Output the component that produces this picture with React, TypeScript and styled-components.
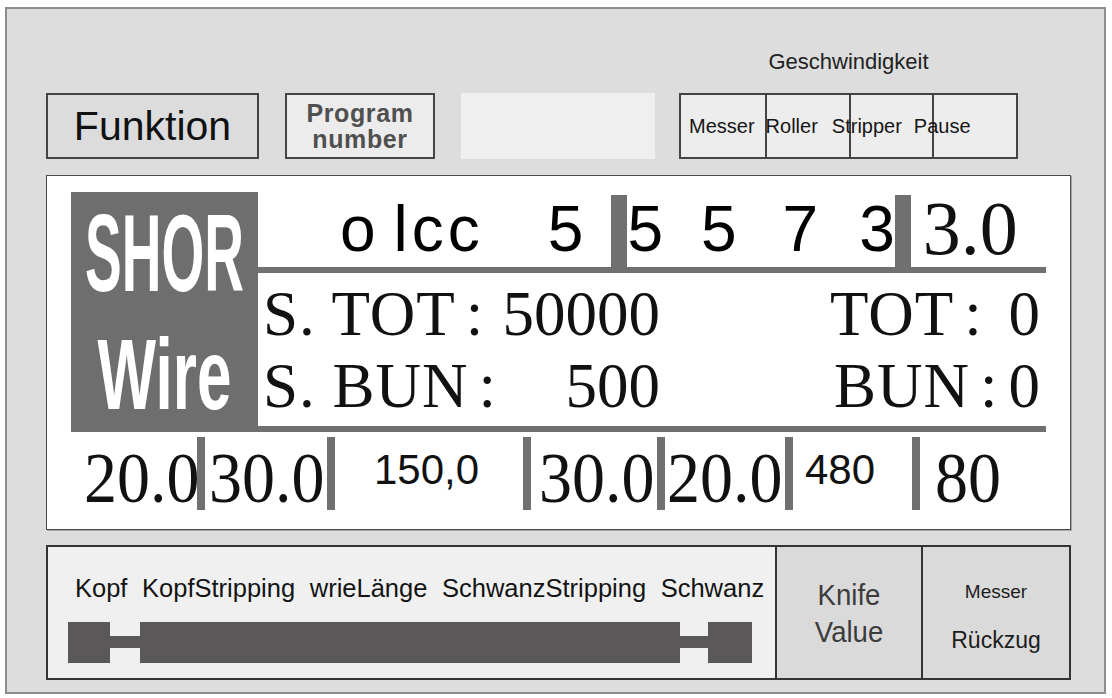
import React from "react";
import styled, { createGlobalStyle } from "styled-components";

const Global = createGlobalStyle`
  html, body { margin: 0; padding: 0; background: #ffffff; }
  body { font-family: "Liberation Sans", Arial, sans-serif; color: #111; }
`;

const Frame = styled.div`
  box-sizing: border-box;
  margin: 7px 0 0 5px;
  width: 1101px;
  height: 687px;
  border: 2px solid #8d8d8d;
  background: #dddddd;
  display: flex;
  flex-direction: column;
  padding-left: 39px;
`;

const TopRow = styled.div`
  height: 150px;
  display: flex;
  align-items: flex-end;
`;

const Box = styled.div<{ $w: number; $mr: number; $bg: string; $border?: boolean }>`
  box-sizing: border-box;
  width: ${(p) => p.$w}px;
  height: 66px;
  margin-right: ${(p) => p.$mr}px;
  background: ${(p) => p.$bg};
  border: ${(p) => (p.$border ? "2px solid #444" : "none")};
  display: flex;
  align-items: center;
  justify-content: center;
  text-align: center;
`;

const FunktionText = styled.span`
  font-size: 41px;
  color: #111;
`;

const ProgramText = styled.span`
  font-size: 25px;
  font-weight: bold;
  line-height: 26px;
  color: #505050;
  letter-spacing: 0.6px;
`;

const SpeedGroup = styled.div`
  display: flex;
  flex-direction: column;
  align-items: center;
  width: 339px;
`;

const SpeedTitle = styled.div`
  font-size: 22px;
  line-height: 28px;
  color: #222;
  margin-bottom: 17px;
`;

const SpeedTable = styled.div`
  box-sizing: border-box;
  width: 339px;
  height: 66px;
  border: 2px solid #444;
  background: #ededed;
  display: grid;
  grid-template-columns: repeat(4, 1fr);
`;

const SpeedCell = styled.div<{ $col: number }>`
  grid-row: 1;
  grid-column: ${(p) => p.$col};
  border-left: ${(p) => (p.$col === 1 ? "none" : "2px solid #444")};
`;

const SpeedLabels = styled.div`
  grid-row: 1;
  grid-column: 1 / -1;
  display: flex;
  align-items: center;
  font-size: 20px;
  color: #151515;
  white-space: nowrap;
`;

const SpeedLabel = styled.span<{ $ml: number }>`
  margin-left: ${(p) => p.$ml}px;
`;

const Display = styled.div`
  box-sizing: border-box;
  margin-top: 16px;
  width: 1025px;
  height: 355px;
  border: 1px solid #4a4a4a;
  box-shadow: 1px 1px 0 #a8a8a8;
  background: #ffffff;
  padding: 16px 0 0 24px;
  display: flex;
  flex-direction: column;
`;

const TopSection = styled.div`
  display: flex;
  height: 240px;
`;

const NameBlock = styled.div`
  box-sizing: border-box;
  width: 187px;
  height: 240px;
  background: #6e6e6e;
  display: flex;
  flex-direction: column;
  align-items: center;
  padding-top: 7px;
`;

const NameLine = styled.div<{ $fs: number; $sy: number; $h: number }>`
  font-family: "Liberation Sans", Arial, sans-serif;
  font-weight: bold;
  font-size: ${(p) => p.$fs}px;
  line-height: ${(p) => p.$fs}px;
  height: ${(p) => p.$h}px;
  color: #ffffff;
  white-space: nowrap;
  transform: scaleY(${(p) => p.$sy});
  transform-origin: 50% 0;
`;

const RightArea = styled.div`
  width: 788px;
  display: flex;
  flex-direction: column;
`;

const NumberRow = styled.div`
  height: 75px;
  display: flex;
  align-items: flex-end;
  white-space: nowrap;
`;

const SansBig = styled.span<{ $ml: number; $ls?: number }>`
  font-family: "Liberation Sans", Arial, sans-serif;
  font-size: 64px;
  line-height: 64px;
  margin-left: ${(p) => p.$ml}px;
  margin-bottom: 6px;
  letter-spacing: ${(p) => p.$ls ?? 0}px;
  color: #000;
`;

const SerifBig = styled.span<{ $ml: number }>`
  font-family: "Liberation Serif", "Times New Roman", serif;
  font-size: 76px;
  line-height: 76px;
  margin-left: ${(p) => p.$ml}px;
  margin-bottom: 1px;
  color: #111;
`;

const Bar = styled.div<{ $w: number; $h: number; $ml?: number; $mt?: number }>`
  flex: none;
  width: ${(p) => p.$w}px;
  height: ${(p) => p.$h}px;
  margin-left: ${(p) => p.$ml ?? 0}px;
  margin-top: ${(p) => p.$mt ?? 0}px;
  background: #707070;
`;

const HLine = styled.div`
  height: 6px;
  background: #707070;
`;

const CountRow = styled.div<{ $pb: number }>`
  box-sizing: border-box;
  height: 77px;
  padding-bottom: ${(p) => p.$pb}px;
  display: grid;
  grid-template-columns: 232px 170px 170px 170px 46px;
  align-items: end;
  font-family: "Liberation Serif", "Times New Roman", serif;
  font-size: 63px;
  line-height: 63px;
  color: #111;
  white-space: nowrap;
`;

const CountCell = styled.div<{ $align: "left" | "right"; $pad?: number; $ls?: number }>`
  text-align: ${(p) => p.$align};
  padding-left: ${(p) => (p.$align === "left" ? p.$pad ?? 0 : 0)}px;
  padding-right: ${(p) => (p.$align === "right" ? p.$pad ?? 0 : 0)}px;
  letter-spacing: ${(p) => p.$ls ?? 0}px;
`;

const Colon = styled.span`
  margin-left: 10px;
`;

const BottomRow = styled.div`
  display: flex;
  align-items: flex-start;
  height: 88px;
  white-space: nowrap;
`;

const ValCell = styled.div<{ $w: number; $pl: number; $sans?: boolean }>`
  flex: none;
  box-sizing: border-box;
  width: ${(p) => p.$w}px;
  padding-left: ${(p) => p.$pl}px;
  font-family: ${(p) =>
    p.$sans
      ? `"Liberation Sans", Arial, sans-serif`
      : `"Liberation Serif", "Times New Roman", serif`};
  font-size: ${(p) => (p.$sans ? 42 : 66)}px;
  line-height: ${(p) => (p.$sans ? 42 : 66)}px;
  margin-top: ${(p) => (p.$sans ? 17 : 15)}px;
  transform: ${(p) => (p.$sans ? "none" : "scaleY(1.1)")};
  transform-origin: 50% 80%;
  color: #111;
`;

const BottomPanel = styled.div`
  box-sizing: border-box;
  margin-top: 15px;
  width: 1025px;
  height: 135px;
  border: 2px solid #333;
  display: grid;
  grid-template-columns: 727px 146px 1fr;
`;

const WireSection = styled.div`
  background: #f0f0f0;
  padding: 26px 0 0 27px;
  display: flex;
  flex-direction: column;
`;

const WireLabels = styled.div`
  font-size: 25.5px;
  line-height: 30px;
  word-spacing: 7.5px;
  white-space: nowrap;
  color: #141414;
`;

const WireSvg = styled.svg`
  display: block;
  margin-top: 19px;
  margin-left: -7px;
`;

const SideCell = styled.div<{ $pt?: number }>`
  box-sizing: border-box;
  background: #dadada;
  border-left: 2px solid #333;
  display: flex;
  flex-direction: column;
  align-items: center;
  justify-content: center;
  padding-top: ${(p) => p.$pt ?? 0}px;
`;

const KnifeText = styled.div`
  font-size: 29px;
  line-height: 37px;
  color: #3c3c3c;
  text-align: center;
  margin-top: 3px;
  transform: scaleX(0.95);
`;

const SmallText = styled.div<{ $size: number; $mb?: number }>`
  font-size: ${(p) => p.$size}px;
  line-height: ${(p) => p.$size + 6}px;
  margin-bottom: ${(p) => p.$mb ?? 0}px;
  color: #1c1c1c;
`;

export default function App() {
  return (
    <>
      <Global />
      <Frame>
        <TopRow>
          <Box $w={213} $mr={26} $bg="#dcdcdc" $border>
            <FunktionText>Funktion</FunktionText>
          </Box>
          <Box $w={150} $mr={26} $bg="#ececec" $border>
            <ProgramText>
              Program
              <br />
              number
            </ProgramText>
          </Box>
          <Box $w={194} $mr={24} $bg="#efefef" />
          <SpeedGroup>
            <SpeedTitle>Geschwindigkeit</SpeedTitle>
            <SpeedTable>
              <SpeedCell $col={1} />
              <SpeedCell $col={2} />
              <SpeedCell $col={3} />
              <SpeedCell $col={4} />
              <SpeedLabels>
                <SpeedLabel $ml={8}>Messer</SpeedLabel>
                <SpeedLabel $ml={11}>Roller</SpeedLabel>
                <SpeedLabel $ml={14}>Stripper</SpeedLabel>
                <SpeedLabel $ml={12}>Pause</SpeedLabel>
              </SpeedLabels>
            </SpeedTable>
          </SpeedGroup>
        </TopRow>

        <Display>
          <TopSection>
            <NameBlock>
              <NameLine $fs={55} $sy={2} $h={126}>SHOR</NameLine>
              <NameLine $fs={62} $sy={1.62} $h={100}>Wire</NameLine>
            </NameBlock>
            <RightArea>
              <NumberRow>
                <SansBig $ml={82}>o</SansBig>
                <SansBig $ml={18} $ls={4}>lcc</SansBig>
                <SansBig $ml={64}>5</SansBig>
                <Bar $w={16} $h={72} $ml={28} />
                <SansBig $ml={0}>5</SansBig>
                <SansBig $ml={38}>5</SansBig>
                <SansBig $ml={46}>7</SansBig>
                <SansBig $ml={41}>3</SansBig>
                <Bar $w={16} $h={72} $ml={0} />
                <SerifBig $ml={12}>3.0</SerifBig>
              </NumberRow>
              <HLine />
              <CountRow $pb={3}>
                <CountCell $align="left" $pad={5} $ls={1}>
                  S. TOT<Colon>:</Colon>
                </CountCell>
                <CountCell $align="right">50000</CountCell>
                <div />
                <CountCell $align="left" $ls={1}>
                  TOT<Colon>:</Colon>
                </CountCell>
                <CountCell $align="right" $pad={6}>0</CountCell>
              </CountRow>
              <CountRow $pb={8}>
                <CountCell $align="left" $pad={5} $ls={1}>
                  S. BUN<Colon>:</Colon>
                </CountCell>
                <CountCell $align="right">500</CountCell>
                <div />
                <CountCell $align="left" $pad={4} $ls={1}>
                  BUN<Colon>:</Colon>
                </CountCell>
                <CountCell $align="right" $pad={6}>0</CountCell>
              </CountRow>
              <HLine />
            </RightArea>
          </TopSection>

          <BottomRow>
            <ValCell $w={126} $pl={13}>20.0</ValCell>
            <Bar $w={8} $h={73} $mt={5} />
            <ValCell $w={122} $pl={4}>30.0</ValCell>
            <Bar $w={8} $h={73} $mt={5} />
            <ValCell $w={188} $pl={39} $sans>150,0</ValCell>
            <Bar $w={8} $h={73} $mt={5} />
            <ValCell $w={126} $pl={8}>30.0</ValCell>
            <Bar $w={8} $h={73} $mt={5} />
            <ValCell $w={120} $pl={2}>20.0</ValCell>
            <Bar $w={8} $h={73} $mt={5} />
            <ValCell $w={119} $pl={12} $sans>480</ValCell>
            <Bar $w={8} $h={73} $mt={5} />
            <ValCell $w={110} $pl={15}>80</ValCell>
          </BottomRow>
        </Display>

        <BottomPanel>
          <WireSection>
            <WireLabels>Kopf KopfStripping wrieLänge SchwanzStripping Schwanz</WireLabels>
            <WireSvg width="690" height="41" viewBox="0 0 690 41">
              <g fill="#5a5858">
                <rect x="0" y="0" width="42" height="41" />
                <rect x="42" y="14" width="30" height="12" />
                <rect x="72" y="0" width="540" height="41" />
                <rect x="612" y="14" width="28" height="12" />
                <rect x="640" y="0" width="44" height="41" />
              </g>
            </WireSvg>
          </WireSection>
          <SideCell>
            <KnifeText>
              Knife
              <br />
              Value
            </KnifeText>
          </SideCell>
          <SideCell $pt={8}>
            <SmallText $size={19} $mb={22}>Messer</SmallText>
            <SmallText $size={23}>Rückzug</SmallText>
          </SideCell>
        </BottomPanel>
      </Frame>
    </>
  );
}
